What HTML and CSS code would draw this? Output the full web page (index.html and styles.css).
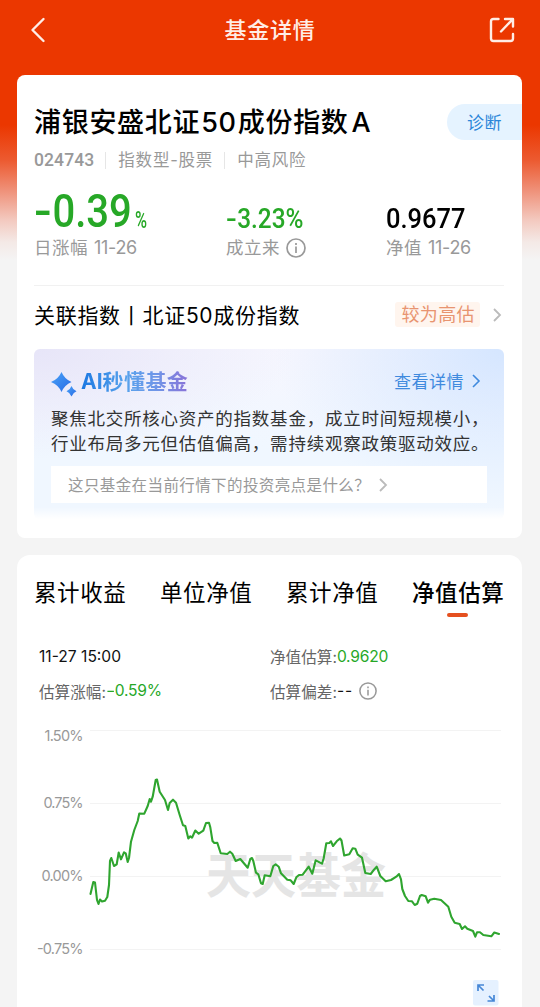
FILE: index.html
```
<!DOCTYPE html>
<html lang="zh-CN">
<head>
  <meta charset="UTF-8">
  <meta name="viewport" content="width=device-width, initial-scale=1.0">
  <title>基金详情</title>
  <link rel="stylesheet" href="styles.css">
</head>
<body>
  <header class="navbar">
    <svg class="nav-icon back" viewBox="0 0 16 26"><path d="M13.5 2 L2.5 13 L13.5 24"/></svg>
    <h1>基金详情</h1>
    <svg class="nav-icon share" viewBox="0 0 26 26"><path d="M9.5 2H4.5Q2 2 2 4.5V21.5Q2 24 4.5 24H21.5Q24 24 24 21.5V17M12 14.500L23.500 2.500M16 2H24V9.500"/></svg>
  </header>

  <section class="card summary">
    <div class="title-row">
      <h2>浦银安盛北证<span class="num">50</span>成份指数<span class="letter">A</span></h2>
      <div class="diagnose">诊断</div>
    </div>
    <div class="meta">
      <span class="code">024743</span>
      <span class="type">指数型-股票</span>
      <span>中高风险</span>
    </div>
    <div class="stats">
      <div class="stat">
        <div class="value big green"><span class="digits"><span class="minus">-</span>0.39</span><span class="unit">%</span></div>
        <div class="label">日涨幅 <span class="date">11-26</span></div>
      </div>
      <div class="stat">
        <div class="value green"><span class="digits"><span class="minus">-</span>3.23%</span></div>
        <div class="label">成立来
          <svg class="info" viewBox="0 0 20 20"><circle cx="10" cy="10" r="9"/><path d="M10 8.500V15M10 5V7"/></svg>
        </div>
      </div>
      <div class="stat">
        <div class="value"><span class="digits wide">0.9677</span></div>
        <div class="label">净值 <span class="date">11-26</span></div>
      </div>
    </div>
    <div class="index-row">
      <div class="index-name">关联指数丨北证<span class="num">50</span>成份指数</div>
      <span class="badge">较为高估</span>
      <svg class="arrow" viewBox="0 0 8 14"><path d="M1 1L7 7L1 13"/></svg>
    </div>
    <div class="ai-box">
      <div class="ai-head">
        <svg class="sparkle" viewBox="0 0 26 25">
          <defs>
            <linearGradient id="spark" x1="0" y1="0" x2="1" y2="1">
              <stop offset="0" stop-color="#4aa4f8"/>
              <stop offset="1" stop-color="#2869e4"/>
            </linearGradient>
          </defs>
          <path d="M10.500 0Q13.500 7 20.500 10Q13.500 13 10.500 20Q7.500 13 0 10Q7.500 7 10.500 0Z"/>
          <path d="M20.500 14Q21.900 17.900 25.500 19.300Q21.900 20.700 20.500 24.500Q19.100 20.700 15.500 19.300Q19.100 17.900 20.500 14Z"/>
        </svg>
        <h3><span class="ai">AI</span>秒懂基金</h3>
        <a class="more">查看详情<svg class="arrow blue" viewBox="0 0 8 14"><path d="M1 1L7 7L1 13"/></svg></a>
      </div>
      <p>聚焦北交所核心资产的指数基金，成立时间短规模小，<br>行业布局多元但估值偏高，需持续观察政策驱动效应。</p>
      <div class="ask">
        <span>这只基金在当前行情下的投资亮点是什么？</span>
        <svg class="arrow" viewBox="0 0 8 14"><path d="M1 1L7 7L1 13"/></svg>
      </div>
    </div>
  </section>

  <section class="card trend">
    <nav class="tabs">
      <div class="tab">累计收益</div>
      <div class="tab">单位净值</div>
      <div class="tab">累计净值</div>
      <div class="tab active">净值估算</div>
    </nav>
    <div class="estimate">
      <div class="time">11-27 15:00</div>
      <div>净值估算:<span class="green">0.9620</span></div>
      <div>估算涨幅:<span class="green"><span class="minus">-</span>0.59%</span></div>
      <div>估算偏差:<span class="dark">--</span>
        <svg class="info small" viewBox="0 0 20 20"><circle cx="10" cy="10" r="9"/><path d="M10 8.500V15M10 5V7"/></svg>
      </div>
    </div>
    <svg class="chart" viewBox="17 715 505 292">
      <g class="grid">
        <path d="M90 730.500H501M90 803.500H501M90 876.500H501M90 949.500H501"/>
      </g>
      <text class="watermark" transform="translate(206 893) scale(1 1.060)" textLength="180" lengthAdjust="spacingAndGlyphs">天天基金</text>
      <g class="axis">
        <text x="44.500" y="741" textLength="39">1.50%</text>
        <text x="43.500" y="808" textLength="40">0.75%</text>
        <text x="41.500" y="881" textLength="42">0.00%</text>
        <text x="37" y="954" textLength="46.500">-0.75%</text>
      </g>
      <polyline class="line" points="90.500,894 93.300,882 95,882.500 97,900 98.500,904 100,899.500 102,901.500 105,900.700 107.300,897 109,885 110,861 111.300,858 114,866 116.700,864.300 118.700,852.500 121,859.300 124,852.300 125.700,853.300 127.700,862 129,858 131,841.700 134.300,830 137.700,821 139.300,813.500 144.300,813.700 147.700,806 149.700,799 151,801.700 152.700,796.700 155.700,780 157,779.500 159.700,791.700 165,800 168,810 169.700,803 173,799.700 176,802.700 179.700,815 183,825.300 185.300,826 188.300,838.500 190.300,836.300 192,837.700 195.300,830.500 198.700,833.700 203.300,830.700 206,823 209,822.700 210.300,827.300 212.500,841 214.300,843 217.300,842.700 220.700,853.300 227.300,854 230,851.700 232.300,853.700 235.700,861 240.300,859 247.700,867.700 250.300,859 252,858 253.300,861 256,872.700 258.300,874.300 261,883.300 262.700,884 264.700,875.300 270.300,876.300 273.300,866 275.700,864.300 278.700,866.700 281,873.300 287.300,879.700 290.700,880.300 293.700,884 296.300,877.300 299,875 302.700,874.700 308.700,866.700 312.300,873.700 315.700,860.300 322,863.700 323.700,858.300 326.300,843.300 329.300,843 331,841.300 333,846 336.700,841.300 340,838.500 341.500,840.500 344.200,855.500 349.300,854.300 352.700,848.300 355.300,848.700 357.700,854.700 362,857.700 365.300,873 370.700,874 374,869.700 376.700,866.700 380.300,876 385.700,881.300 391,880 396.300,876.700 399,874 401,879.300 402.300,889 405,896 408.300,901 412,901.300 414.700,905 417.300,903.700 420,896 421.700,895 425.700,896.300 428,902.700 430,899.700 434.300,898.700 441,900 448.300,906.700 451.300,916.700 454.700,922.700 459.700,924 462,929 465,926.300 467.300,928.700 473,931 475.300,936.700 477,932.300 480,932.300 483.300,935 491.300,936.300 494.300,932.500 499,934"/>
      <g class="expand">
        <rect x="473" y="980" width="25.500" height="25.500" rx="2"/>
        <path d="M484 985H478V991M478.500 985.500L483.500 990.500M494 995V1001H487.500M493.500 1000.500L489 996"/>
      </g>
    </svg>
  </section>
</body>
</html>
```
FILE: styles.css
```
* {
  box-sizing: border-box;
}

body {
  margin: 0;
  height: 1007px;
  overflow: hidden;
  padding: 0 18px 0 17px;
  background: #f4f4f4 linear-gradient(#eb3700 0, #eb3700 125px, #ec5a30 160px, #ef9078 190px, #f3c9bf 220px, #f4e9e6 242px, #f4f4f4 260px) no-repeat;
  font-family: Inter, "Noto Sans CJK SC", sans-serif;
  color: #000;
}

h1, h2, h3, p {
  margin: 0;
}

svg {
  display: block;
  flex: none;
}

.green {
  color: #27a827;
}

/* 顶部导航 */
.navbar {
  height: 75px;
  padding: 0 7px 15px 13px;
  display: flex;
  align-items: center;
  justify-content: space-between;
}

.navbar h1 {
  color: #ffede6;
  font-size: 22px;
  font-weight: 500;
  letter-spacing: .8px;
  padding: 0 0 4px 5px;
}

.nav-icon {
  fill: none;
  stroke: #ffede6;
  stroke-width: 2.4;
  stroke-linecap: round;
  stroke-linejoin: round;
}

.nav-icon.back {
  width: 16px;
  height: 26px;
}

.nav-icon.share {
  width: 26px;
  height: 26px;
}

.card {
  background: #fff;
  border-radius: 8px;
}

/* 基金概况 */
.summary {
  height: 463px;
  padding: 29px 18px 0 17px;
}

.title-row {
  height: 36px;
  margin-right: -18px;
  display: flex;
  align-items: center;
  justify-content: space-between;
}

h2 {
  padding-top: 2px;
  font-size: 27px;
  line-height: 36px;
  font-weight: 500;
  letter-spacing: .7px;
  white-space: nowrap;
}

h2 .num {
  margin: 0 1px;
}

h2 .letter {
  margin-left: 3px;
}

.diagnose {
  width: 75px;
  height: 36px;
  padding-left: 20px;
  border-radius: 18px 0 0 18px;
  background: #e5f3ff;
  color: #2b86d9;
  font-size: 17px;
  line-height: 38px;
  letter-spacing: .4px;
}

.meta {
  height: 24px;
  margin-top: 8px;
  display: flex;
  align-items: center;
  color: #999;
  font-size: 16.5px;
  letter-spacing: .8px;
  white-space: nowrap;
}

.meta span + span {
  margin-left: 11px;
  padding-left: 12px;
  line-height: 17px;
  border-left: 1px solid #e6e6e6;
}

.meta .code {
  font-family: Roboto, sans-serif;
  font-weight: 500;
  font-size: 17.5px;
  letter-spacing: .1px;
}

.stats {
  height: 114px;
  padding-top: 15px;
  border-bottom: 1px solid #f1f1f1;
  display: grid;
  grid-template-columns: 192px 160px 1fr;
}

.value {
  height: 50px;
  display: flex;
  align-items: flex-end;
  font-family: Roboto, sans-serif;
  font-weight: 500;
  font-size: 28px;
  line-height: 28px;
  padding-bottom: 4px;
}

.digits {
  transform: scaleX(.87);
  transform-origin: left;
}

.digits.wide {
  transform: scaleX(.91);
}

.minus {
  display: inline-block;
  transform: scaleX(1.3);
  transform-origin: left;
  margin-right: .12em;
}

.value.big {
  padding-bottom: 8px;
}

.big .digits {
  font-size: 46px;
  line-height: 36px;
  width: 101px;
  white-space: nowrap;
}

.unit {
  font-size: 24px;
  line-height: 17px;
  transform: scaleX(.68);
  transform-origin: left;
}

.label {
  display: flex;
  align-items: center;
  gap: 6px;
  height: 22px;
  color: #999;
  font-size: 17.5px;
  line-height: 20px;
  letter-spacing: .5px;
  white-space: nowrap;
}

.label .date {
  font-size: 18px;
  letter-spacing: -.3px;
}

.info {
  width: 20px;
  height: 20px;
  fill: none;
  stroke: #999;
  stroke-width: 1.7;
}

.index-row {
  height: 63px;
  display: flex;
  align-items: center;
  padding: 0 3px 6px 0;
}

.index-name {
  flex: 1;
  margin-top: -2px;
  font-size: 21px;
  letter-spacing: .7px;
  white-space: nowrap;
}

.badge {
  height: 25px;
  padding: 0 5px 0 6px;
  margin-right: 13px;
  background: #fff5ee;
  border-radius: 3px;
  color: #e89470;
  font-size: 18px;
  line-height: 25px;
  letter-spacing: .4px;
}

.arrow {
  width: 8px;
  height: 14px;
  fill: none;
  stroke: #bbb;
  stroke-width: 1.8;
  overflow: visible;
}

.arrow.blue {
  stroke: #3f8ade;
  stroke-width: 1.6;
}

.ai-box {
  height: 170px;
  padding: 17px 17px 0;
  border-radius: 6px;
  background:
    linear-gradient(to bottom, rgba(255, 255, 255, 0) 93%, #fff),
    radial-gradient(ellipse 230px 160px at 100% 0, #d5e6ff, rgba(213, 230, 255, 0)),
    radial-gradient(ellipse 260px 110px at 0 0, #e7e5f8, rgba(231, 229, 248, 0)),
    linear-gradient(#f6f6fe, #f0f7ff 60%);
}

.ai-head {
  height: 29px;
  display: flex;
  align-items: center;
}

.sparkle {
  width: 26px;
  height: 25px;
  margin-top: 7px;
  fill: url(#spark);
}

h3 {
  margin: 2px 0 0 4px;
  font-size: 21px;
  line-height: 28px;
  font-weight: 700;
  letter-spacing: .4px;
  background: linear-gradient(90deg, #1b78e2, #57a2ec 42%, #6f96e8 70%, #8973d8);
  -webkit-background-clip: text;
  background-clip: text;
  color: transparent;
}

h3 .ai {
  letter-spacing: 0;
}

.more {
  margin-left: auto;
  margin-right: 7px;
  display: flex;
  align-items: center;
  gap: 8px;
  color: #3f8ade;
  font-size: 17px;
  letter-spacing: .5px;
}

.ai-box p {
  margin-top: 12px;
  color: #333;
  font-size: 17.5px;
  line-height: 24.5px;
  letter-spacing: .76px;
  white-space: nowrap;
}

.ask {
  height: 37px;
  margin-top: 10px;
  padding: 0 0 2px 17px;
  display: flex;
  align-items: center;
  background: #fff;
  color: #999;
  font-size: 15.5px;
  letter-spacing: .4px;
}

.ask .arrow {
  margin: 2px 0 0 9px;
}

/* 净值走势 */
.trend {
  height: 470px;
  margin-top: 17px;
  border-radius: 13px 13px 0 0;
}

.tabs {
  height: 84px;
  padding: 21px 0 0 17px;
  display: grid;
  grid-template-columns: repeat(4, 126px);
  font-size: 22.5px;
  line-height: 33px;
  letter-spacing: .6px;
}

.tab.active {
  font-weight: 500;
}

.tab.active::after {
  content: "";
  display: block;
  width: 21px;
  height: 4px;
  margin: 4px 0 0 35px;
  border-radius: 2px;
  background: #e5501f;
}

.estimate {
  height: 76px;
  padding-left: 22px;
  display: grid;
  grid-template-columns: 231px 1fr;
  grid-template-rows: 34px 35px;
  align-items: center;
  color: #666;
  font-size: 15.6px;
}

.estimate > div {
  display: flex;
  align-items: center;
}

.estimate .green {
  letter-spacing: -.2px;
}

.estimate .time,
.dark {
  color: #111;
}

.estimate .time {
  padding-top: 1px;
}

.dark {
  letter-spacing: 1px;
}

.info.small {
  width: 18px;
  height: 18px;
  margin-left: 6px;
}

.chart {
  width: 505px;
  height: 292px;
}

.grid path {
  stroke: #f3f3f3;
  fill: none;
}

.axis text {
  fill: #999;
  font-size: 14.5px;
}

.watermark {
  fill: #e5e5e5;
  font-family: "Noto Sans CJK SC", sans-serif;
  font-size: 45px;
  font-weight: 700;
}

.line {
  fill: none;
  stroke: #2fa52f;
  stroke-width: 2.1;
  stroke-linejoin: round;
  stroke-linecap: round;
}

.expand rect {
  fill: #e5f1ff;
}

.expand path {
  fill: none;
  stroke: #4687d6;
  stroke-width: 1.7;
}
```
